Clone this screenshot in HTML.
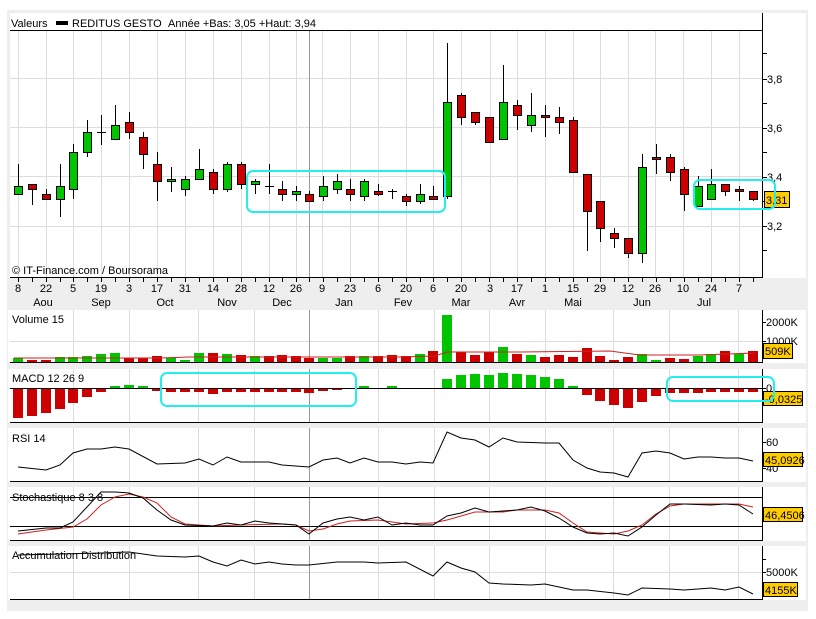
<!DOCTYPE html>
<html><head><meta charset="utf-8"><style>
html,body{margin:0;padding:0;background:#fff;width:816px;height:619px;overflow:hidden}
svg{display:block;font-family:"Liberation Sans",sans-serif;font-size:11px}
</style></head><body>
<svg width="816" height="619" viewBox="0 0 816 619" xmlns="http://www.w3.org/2000/svg">
<rect x="7" y="10" width="801" height="601" fill="#eeeeee"/>
<!-- main panel -->
<rect x="10" y="13" width="796" height="265" fill="#fff"/>
<g stroke="#dddddd" stroke-width="1">
<path d="M10 78.5H762M10 127.5H762M10 176.5H762M10 226.5H762"/>
<path d="M18.5 31V277M46.5 31V277M73.5 31V277M101.5 31V277M129.5 31V277M157.5 31V277M185.5 31V277M213.5 31V277M241.5 31V277M269.5 31V277M296.5 31V277M322.5 31V277M350.5 31V277M378.5 31V277M406.5 31V277M433.5 31V277M461.5 31V277M490.5 31V277M517.5 31V277M545.5 31V277M573.5 31V277M600.5 31V277M628.5 31V277M655.5 31V277M683.5 31V277M711.5 31V277M739.5 31V277"/>
</g>
<path d="M309.5 31V277" stroke="#999" stroke-width="1"/>
<path d="M10 30.5H762M10 277.5H762M762.5 13V278" stroke="#000" stroke-width="1" fill="none"/>
<path d="M763 53.5h4M763 79.5h4M763 103.5h4M763 128.5h4M763 152.5h4M763 177.5h4M763 201.5h4M763 226.5h4M763 250.5h4" stroke="#000"/>
<g fill="#000"><text x="767" y="83">3,8</text><text x="767" y="132">3,6</text><text x="767" y="181">3,4</text><text x="767" y="230">3,2</text></g>
<text x="11" y="27" fill="#000">Valeurs</text>
<rect x="56" y="21" width="12" height="4" fill="#000"/>
<text x="72" y="27" fill="#000">REDITUS GESTO</text>
<text x="168" y="27" fill="#000">Année +Bas: 3,05 +Haut: 3,94</text>
<text x="12" y="274" fill="#000">© IT-Finance.com / Boursorama</text>
<!-- wicks -->
<path stroke="#000" stroke-width="1" fill="none" d="M18.5 164V194M32.5 184V205M46.5 189V199M60.5 164V217M73.5 144V199M87.5 120V157M101.5 115V145M115.5 105V139M129.5 112V139M143.5 132V169M157.5 152V201M171.5 167V192M185.5 176V196M199.5 149V179M213.5 169V194M227.5 162V192M241.5 162V189M255.5 179V194M269.5 164V194M282.5 181V201M296.5 186V201M309.5 191V201M323.5 176V201M337.5 174V194M350.5 179V201M364.5 179V201M378.5 184V196M392.5 189V199M406.5 194V206M420.5 184V204M433.5 186V199M447.5 43V199M461.5 93V125M475.5 112V125M489.5 117V142M503.5 65V139M517.5 100V130M531.5 93V132M545.5 105V137M559.5 107V134M573.5 117V172M587.5 174V251M600.5 201V242M614.5 228V248M628.5 238V258M642.5 154V263M656.5 144V174M670.5 154V181M684.5 167V211M698.5 176V206M711.5 169V199M725.5 184V196M739.5 186V201M753.5 191V201M97 132.5h9M265 186.5h9M388 191.5h9"/>
<g stroke="#000" stroke-width="1">
<g fill="#00c400">
<rect x="14.5" y="186.5" width="8" height="8"/><rect x="56.5" y="186.5" width="8" height="13"/><rect x="69.5" y="152.5" width="8" height="37"/><rect x="83.5" y="132.5" width="8" height="20"/><rect x="111.5" y="125.5" width="8" height="14"/><rect x="167.5" y="179.5" width="8" height="2"/><rect x="181.5" y="179.5" width="8" height="10"/><rect x="195.5" y="169.5" width="8" height="10"/><rect x="223.5" y="164.5" width="8" height="25"/><rect x="251.5" y="181.5" width="8" height="3"/><rect x="292.5" y="191.5" width="8" height="3"/><rect x="319.5" y="186.5" width="8" height="10"/><rect x="333.5" y="181.5" width="8" height="8"/><rect x="360.5" y="181.5" width="8" height="15"/><rect x="416.5" y="194.5" width="8" height="7"/><rect x="443.5" y="102.5" width="8" height="94"/><rect x="499.5" y="102.5" width="8" height="37"/><rect x="527.5" y="115.5" width="8" height="10"/><rect x="638.5" y="167.5" width="8" height="86"/><rect x="694.5" y="186.5" width="8" height="20"/><rect x="707.5" y="184.5" width="8" height="15"/>
</g>
<g fill="#cc0000">
<rect x="28.5" y="184.5" width="8" height="5"/><rect x="42.5" y="194.5" width="8" height="5"/><rect x="125.5" y="122.5" width="8" height="10"/><rect x="139.5" y="137.5" width="8" height="17"/><rect x="153.5" y="164.5" width="8" height="17"/><rect x="209.5" y="172.5" width="8" height="17"/><rect x="237.5" y="164.5" width="8" height="20"/><rect x="278.5" y="189.5" width="8" height="5"/><rect x="305.5" y="194.5" width="8" height="7"/><rect x="346.5" y="189.5" width="8" height="5"/><rect x="374.5" y="191.5" width="8" height="3"/><rect x="402.5" y="196.5" width="8" height="5"/><rect x="429.5" y="196.5" width="8" height="3"/><rect x="457.5" y="95.5" width="8" height="22"/><rect x="471.5" y="112.5" width="8" height="10"/><rect x="485.5" y="117.5" width="8" height="25"/><rect x="513.5" y="105.5" width="8" height="10"/><rect x="541.5" y="115.5" width="8" height="2"/><rect x="555.5" y="117.5" width="8" height="5"/><rect x="569.5" y="120.5" width="8" height="52"/><rect x="583.5" y="174.5" width="8" height="37"/><rect x="596.5" y="201.5" width="8" height="27"/><rect x="610.5" y="233.5" width="8" height="5"/><rect x="624.5" y="238.5" width="8" height="15"/><rect x="652.5" y="157.5" width="8" height="2"/><rect x="666.5" y="157.5" width="8" height="15"/><rect x="680.5" y="169.5" width="8" height="25"/><rect x="721.5" y="184.5" width="8" height="7"/><rect x="735.5" y="189.5" width="8" height="2"/><rect x="749.5" y="191.5" width="8" height="8"/>
</g>
</g>
<rect x="764.5" y="191.5" width="25" height="16" fill="#ffcc00" stroke="#000"/>
<text x="766" y="204" fill="#000">3,31</text>
<rect x="247" y="171" width="198" height="41" rx="6" fill="none" stroke="#22eeee" stroke-width="2"/>
<rect x="694" y="180" width="81" height="29" rx="6" fill="none" stroke="#22eeee" stroke-width="2"/>
<!-- bottom axis -->
<path stroke="#000" d="M18.5 278v4M32.5 278v4M46.5 278v4M60.5 278v4M73.5 278v4M87.5 278v4M101.5 278v4M115.5 278v4M129.5 278v4M143.5 278v4M157.5 278v4M171.5 278v4M185.5 278v4M199.5 278v4M213.5 278v4M227.5 278v4M241.5 278v4M255.5 278v4M269.5 278v4M282.5 278v4M296.5 278v4M309.5 278v4M323.5 278v4M337.5 278v4M350.5 278v4M364.5 278v4M378.5 278v4M392.5 278v4M406.5 278v4M420.5 278v4M433.5 278v4M447.5 278v4M461.5 278v4M475.5 278v4M489.5 278v4M503.5 278v4M517.5 278v4M531.5 278v4M545.5 278v4M559.5 278v4M573.5 278v4M587.5 278v4M600.5 278v4M614.5 278v4M628.5 278v4M642.5 278v4M656.5 278v4M670.5 278v4M684.5 278v4M698.5 278v4M711.5 278v4M725.5 278v4M739.5 278v4M753.5 278v4"/>
<g fill="#000" text-anchor="middle">
<text x="18" y="292">8</text><text x="46" y="292">22</text><text x="73" y="292">5</text><text x="101" y="292">19</text><text x="129" y="292">3</text><text x="157" y="292">17</text><text x="185" y="292">31</text><text x="213" y="292">14</text><text x="241" y="292">28</text><text x="269" y="292">12</text><text x="296" y="292">26</text><text x="322" y="292">9</text><text x="350" y="292">23</text><text x="378" y="292">6</text><text x="406" y="292">20</text><text x="433" y="292">6</text><text x="461" y="292">20</text><text x="490" y="292">3</text><text x="517" y="292">17</text><text x="545" y="292">1</text><text x="573" y="292">15</text><text x="600" y="292">29</text><text x="628" y="292">12</text><text x="655" y="292">26</text><text x="683" y="292">10</text><text x="711" y="292">24</text><text x="739" y="292">7</text>
<text x="43" y="306">Aou</text><text x="101" y="306">Sep</text><text x="165" y="306">Oct</text><text x="227" y="306">Nov</text><text x="282" y="306">Dec</text><text x="344" y="306">Jan</text><text x="403" y="306">Fev</text><text x="461" y="306">Mar</text><text x="517" y="306">Avr</text><text x="573" y="306">Mai</text><text x="642" y="306">Jun</text><text x="704" y="306">Jul</text>
</g>
<!-- lower panels backgrounds -->
<g fill="#fff">
<rect x="8" y="310" width="798" height="53"/>
<rect x="8" y="369" width="798" height="54"/>
<rect x="8" y="428" width="798" height="54"/>
<rect x="8" y="487" width="798" height="54"/>
<rect x="8" y="546" width="798" height="54"/>
</g>
<g stroke="#dddddd">
<path d="M73.5 310v52M129.5 310v52M198.5 310v52M254.5 310v52M378.5 310v52M434.5 310v52M489.5 310v52M545.5 310v52M613.5 310v52M669.5 310v52M738.5 310v52"/>
<path d="M73.5 369v53M129.5 369v53M198.5 369v53M254.5 369v53M378.5 369v53M434.5 369v53M489.5 369v53M545.5 369v53M613.5 369v53M669.5 369v53M738.5 369v53"/>
<path d="M73.5 428v53M129.5 428v53M198.5 428v53M254.5 428v53M378.5 428v53M434.5 428v53M489.5 428v53M545.5 428v53M613.5 428v53M669.5 428v53M738.5 428v53"/>
<path d="M73.5 487v53M129.5 487v53M198.5 487v53M254.5 487v53M378.5 487v53M434.5 487v53M489.5 487v53M545.5 487v53M613.5 487v53M669.5 487v53M738.5 487v53"/>
<path d="M73.5 546v53M129.5 546v53M198.5 546v53M254.5 546v53M378.5 546v53M434.5 546v53M489.5 546v53M545.5 546v53M613.5 546v53M669.5 546v53M738.5 546v53"/>
<path d="M10 341.5H762M10 572.5H762"/>
</g>
<path stroke="#999" d="M309.5 310v52M309.5 369v53M309.5 428v53M309.5 487v53M309.5 546v53"/>
<!-- volume -->
<g fill="#00c400">
<rect x="13" y="358" width="10" height="4"/><rect x="55" y="357" width="10" height="5"/><rect x="68" y="357" width="10" height="5"/><rect x="82" y="356" width="10" height="6"/><rect x="96" y="354" width="10" height="8"/><rect x="110" y="353" width="10" height="9"/><rect x="166" y="358" width="10" height="4"/><rect x="180" y="360" width="10" height="2"/><rect x="194" y="353" width="10" height="9"/><rect x="222" y="354" width="10" height="8"/><rect x="250" y="356" width="10" height="6"/><rect x="318" y="358" width="10" height="4"/><rect x="332" y="358" width="10" height="4"/><rect x="359" y="356" width="10" height="6"/><rect x="415" y="354" width="10" height="8"/><rect x="442" y="315" width="10" height="47"/><rect x="498" y="347" width="10" height="15"/><rect x="526" y="355" width="10" height="7"/><rect x="637" y="354" width="10" height="8"/><rect x="651" y="360" width="10" height="2"/><rect x="693" y="356" width="10" height="6"/><rect x="706" y="354" width="10" height="8"/><rect x="734" y="354" width="10" height="8"/>
</g>
<g fill="#cc0000">
<rect x="27" y="360" width="10" height="2"/><rect x="41" y="360" width="10" height="2"/><rect x="124" y="358" width="10" height="4"/><rect x="138" y="358" width="10" height="4"/><rect x="152" y="356" width="10" height="6"/><rect x="208" y="353" width="10" height="9"/><rect x="236" y="355" width="10" height="7"/><rect x="264" y="356" width="10" height="6"/><rect x="277" y="355" width="10" height="7"/><rect x="291" y="356" width="10" height="6"/><rect x="304" y="358" width="10" height="4"/><rect x="345" y="356" width="10" height="6"/><rect x="373" y="356" width="10" height="6"/><rect x="387" y="355" width="10" height="7"/><rect x="401" y="356" width="10" height="6"/><rect x="428" y="351" width="10" height="11"/><rect x="456" y="352" width="10" height="10"/><rect x="470" y="355" width="10" height="7"/><rect x="484" y="352" width="10" height="10"/><rect x="512" y="354" width="10" height="8"/><rect x="540" y="357" width="10" height="5"/><rect x="554" y="355" width="10" height="7"/><rect x="568" y="357" width="10" height="5"/><rect x="582" y="348" width="10" height="14"/><rect x="595" y="356" width="10" height="6"/><rect x="609" y="360" width="10" height="2"/><rect x="623" y="357" width="10" height="5"/><rect x="665" y="358" width="10" height="4"/><rect x="679" y="359" width="10" height="3"/><rect x="720" y="351" width="10" height="11"/><rect x="748" y="351" width="10" height="11"/>
</g>
<polyline fill="none" stroke="#cc2222" points="14,358 160,358 190,357 400,357 435,356 447,352 520,352 610,351 640,355 700,355 755,353"/>
<path stroke="#000" fill="none" d="M10 362.5H762M762.5 310V363M763 322.5h3M763 341.5h3"/>
<text x="766" y="326" fill="#000">2000K</text><text x="766" y="345" fill="#000">1000K</text>
<rect x="763.5" y="343.5" width="29" height="15" fill="#ffcc00" stroke="#000"/><text x="765" y="355" fill="#000">509K</text>
<text x="12" y="323" fill="#000">Volume 15</text>
<!-- MACD -->
<g fill="#cc0000">
<rect x="13" y="388" width="10" height="30"/><rect x="27" y="388" width="10" height="28"/><rect x="41" y="388" width="10" height="25"/><rect x="55" y="388" width="10" height="21"/><rect x="68" y="388" width="10" height="15"/><rect x="82" y="388" width="10" height="9"/><rect x="96" y="388" width="10" height="4"/>
<rect x="152" y="388" width="10" height="3"/><rect x="166" y="388" width="10" height="4"/><rect x="180" y="388" width="10" height="4"/><rect x="194" y="388" width="10" height="4"/><rect x="208" y="388" width="10" height="6"/><rect x="222" y="388" width="10" height="4"/><rect x="236" y="388" width="10" height="4"/><rect x="250" y="388" width="10" height="4"/><rect x="264" y="388" width="10" height="4"/><rect x="277" y="388" width="10" height="4"/><rect x="291" y="388" width="10" height="4"/><rect x="304" y="388" width="10" height="5"/><rect x="318" y="388" width="10" height="3"/><rect x="332" y="388" width="10" height="2"/><rect x="345" y="388" width="10" height="1"/>
<rect x="582" y="388" width="10" height="7"/><rect x="595" y="388" width="10" height="13"/><rect x="609" y="388" width="10" height="17"/><rect x="623" y="388" width="10" height="20"/><rect x="637" y="388" width="10" height="14"/><rect x="651" y="388" width="10" height="8"/><rect x="665" y="388" width="10" height="5"/><rect x="679" y="388" width="10" height="5"/><rect x="693" y="388" width="10" height="5"/><rect x="706" y="388" width="10" height="4"/><rect x="720" y="388" width="10" height="4"/><rect x="734" y="388" width="10" height="4"/><rect x="748" y="388" width="10" height="4"/>
</g>
<g fill="#00c400">
<rect x="110" y="386" width="10" height="2"/><rect x="124" y="385" width="10" height="3"/><rect x="138" y="386" width="10" height="2"/><rect x="359" y="386" width="10" height="2"/><rect x="387" y="386" width="10" height="2"/>
<rect x="442" y="379" width="10" height="9"/><rect x="456" y="375" width="10" height="13"/><rect x="470" y="374" width="10" height="14"/><rect x="484" y="375" width="10" height="13"/><rect x="498" y="373" width="10" height="15"/><rect x="512" y="374" width="10" height="14"/><rect x="526" y="375" width="10" height="13"/><rect x="540" y="377" width="10" height="11"/><rect x="554" y="379" width="10" height="9"/><rect x="568" y="386" width="10" height="2"/>
</g>
<path stroke="#000" fill="none" d="M10 388.5H762M10 422.5H762M762.5 369V423M763 388.5h3"/>
<text x="766" y="392" fill="#000">0</text>
<rect x="763.5" y="391.5" width="39" height="14" fill="#ffcc00" stroke="#000"/><text x="765" y="403" fill="#000">-0,0325</text>
<text x="12" y="382" fill="#000">MACD 12 26 9</text>
<rect x="161" y="373" width="195" height="33" rx="6" fill="none" stroke="#22eeee" stroke-width="2"/>
<rect x="667" y="377" width="107" height="24" rx="6" fill="none" stroke="#22eeee" stroke-width="2"/>
<!-- RSI -->
<polyline fill="none" stroke="#000" points="18,467 46,470 60,465 73,453 87,449 101,449 115,447 129,449 157,464 185,463 199,459 213,465 227,457 241,462 269,462 282,465 309,467 323,460 337,458 350,463 364,458 378,462 392,462 406,464 420,462 433,463 447,432 461,438 475,440 489,447 503,438 517,442 545,443 559,443 573,460 587,468 600,472 614,473 628,477 642,453 656,451 670,453 684,459 698,457 711,457 725,458 739,458 753,461"/>
<path stroke="#000" fill="none" d="M10 481.5H762M762.5 428V482M763 442.5h3M763 455.5h3M763 468.5h3"/>
<text x="766" y="446" fill="#000">60</text><text x="766" y="472" fill="#000">40</text>
<rect x="763.5" y="452.5" width="39" height="14" fill="#ffcc00" stroke="#000"/><text x="765" y="464" fill="#000">45,0926</text>
<text x="12" y="442" fill="#000">RSI 14</text>
<!-- Stochastic -->
<path stroke="#000" fill="none" d="M10 497.5H762M10 526.5H762M10 540.5H762M762.5 487V541"/>
<polyline fill="none" stroke="#cc2222" points="18,534 46,530 73,527 87,519 101,505 115,497 129,494 143,497 157,503 171,517 185,524 213,526 241,525 282,524 296,525 309,531 323,529 337,524 350,521 378,520 406,524 433,523 447,520 461,516 475,512 503,512 517,510 545,510 559,513 573,523 587,532 600,533 614,534 628,531 642,525 656,514 670,506 684,504 739,504 753,507"/>
<polyline fill="none" stroke="#000" points="18,531 46,528 60,528 73,522 101,492 115,492 129,493 143,498 157,510 171,520 185,525 213,526 227,523 241,525 255,521 269,523 296,525 309,534 323,523 337,519 350,517 364,520 378,517 392,525 406,523 420,525 433,525 447,516 461,513 475,508 489,512 503,511 517,510 531,507 545,511 559,518 573,527 587,533 600,534 614,533 628,536 642,527 656,515 670,504 684,504 711,505 725,504 739,505 753,514"/>
<rect x="763.5" y="507.5" width="39" height="14" fill="#ffcc00" stroke="#000"/><text x="765" y="519" fill="#000">46,4506</text>
<text x="12" y="501" fill="#000">Stochastique 8 3 8</text>
<!-- AD -->
<polyline fill="none" stroke="#000" points="18,555 101,553 129,552 157,556 185,557 199,556 213,562 227,566 241,560 255,564 269,562 282,564 296,565 309,565 337,562 350,562 364,562 378,563 406,562 433,576 447,562 461,568 475,572 489,583 503,584 531,585 545,584 559,587 573,590 587,590 614,593 628,595 642,588 670,589 684,590 698,589 711,588 725,590 739,587 753,594"/>
<path stroke="#000" fill="none" d="M10 599.5H762M762.5 546V600M763 559.5h3M763 572.5h3"/>
<text x="766" y="576" fill="#000">5000K</text>
<rect x="763.5" y="582.5" width="34" height="14" fill="#ffcc00" stroke="#000"/><text x="765" y="594" fill="#000">4155K</text>
<text x="12" y="559" fill="#000">Accumulation Distribution</text>
</svg>
</body></html>
